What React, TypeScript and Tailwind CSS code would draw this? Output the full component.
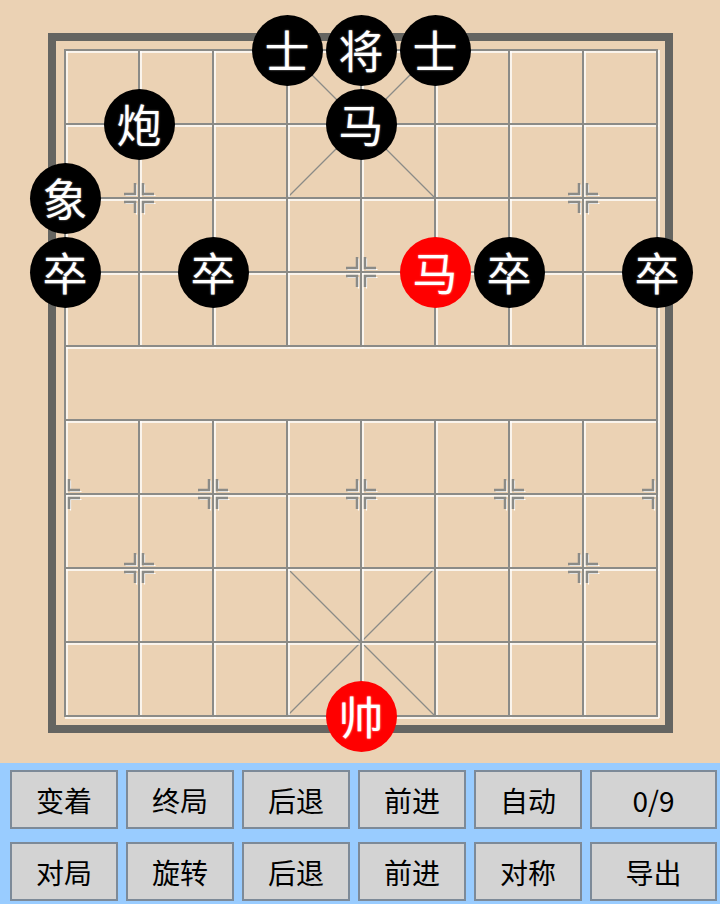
import React from "react";

const X0 = 65;
const Y0 = 50;
const STEP = 74;

const px = (c: number) => X0 + STEP * c;
const py = (r: number) => Y0 + STEP * r;

type Piece = { label: string; c: number; r: number; red?: boolean };

const pieces: Piece[] = [
  { label: "士", c: 3, r: 0 },
  { label: "将", c: 4, r: 0 },
  { label: "士", c: 5, r: 0 },
  { label: "炮", c: 1, r: 1 },
  { label: "马", c: 4, r: 1 },
  { label: "象", c: 0, r: 2 },
  { label: "卒", c: 0, r: 3 },
  { label: "卒", c: 2, r: 3 },
  { label: "马", c: 5, r: 3, red: true },
  { label: "卒", c: 6, r: 3 },
  { label: "卒", c: 8, r: 3 },
  { label: "帅", c: 4, r: 9, red: true },
];

// cannon / soldier marks
const marks: [number, number][] = [
  [1, 2], [7, 2],
  [0, 3], [2, 3], [4, 3], [6, 3], [8, 3],
  [0, 6], [2, 6], [4, 6], [6, 6], [8, 6],
  [1, 7], [7, 7],
];

const buttonRows = [
  ["变着", "终局", "后退", "前进", "自动", "0/9"],
  ["对局", "旋转", "后退", "前进", "对称", "导出"],
];

const GRAY = "#8b8b87";
const WHITE = "#ffffff";

function markPaths(c: number, r: number) {
  const x = px(c);
  const y = py(r);
  const g = 4;
  const l = 11;
  const out: string[] = [];
  for (const dx of [-1, 1]) {
    if (c === 0 && dx === -1) continue;
    if (c === 8 && dx === 1) continue;
    for (const dy of [-1, 1]) {
      out.push(
        `M${x + dx * g} ${y + dy * (g + l)}L${x + dx * g} ${y + dy * g}L${x + dx * (g + l)} ${y + dy * g}`,
      );
    }
  }
  return out;
}

function Board() {
  const vertical: [number, number, number][] = [];
  for (let c = 0; c <= 8; c++) {
    if (c === 0 || c === 8) {
      vertical.push([px(c), py(0), py(9)]);
    } else {
      vertical.push([px(c), py(0), py(4)]);
      vertical.push([px(c), py(5), py(9)]);
    }
  }
  const horizontal = Array.from({ length: 10 }, (_, r) => py(r));
  const diagonals = [
    [px(3), py(0), px(5), py(2)],
    [px(5), py(0), px(3), py(2)],
    [px(3), py(7), px(5), py(9)],
    [px(5), py(7), px(3), py(9)],
  ];
  const allMarks = marks.flatMap(([c, r]) => markPaths(c, r));

  return (
    <svg className="absolute left-0 top-0" width={720} height={763} viewBox="0 0 720 763">
      <rect x={52} y={37} width={617} height={692} fill="none" stroke="#656561" strokeWidth={8} />
      {diagonals.map(([x1, y1, x2, y2], i) => (
        <line key={i} x1={x1} y1={y1} x2={x2} y2={y2} stroke={GRAY} strokeWidth={1.3} />
      ))}
      {/* white highlight */}
      {vertical.map(([x, y1, y2], i) => (
        <line key={`vw${i}`} x1={x + 2} y1={y1} x2={x + 2} y2={y2 + 2} stroke={WHITE} strokeWidth={1.5} />
      ))}
      {horizontal.map((y, i) => (
        <line key={`hw${i}`} x1={px(0)} y1={y + 2} x2={px(8) + 2} y2={y + 2} stroke={WHITE} strokeWidth={1.5} />
      ))}
      {allMarks.map((d, i) => (
        <path key={`mw${i}`} d={d} transform="translate(1.5 1.5)" fill="none" stroke={WHITE} strokeWidth={1.2} />
      ))}
      {/* gray lines */}
      {vertical.map(([x, y1, y2], i) => (
        <line key={`vg${i}`} x1={x} y1={y1 - 1} x2={x} y2={y2 + 1} stroke={GRAY} strokeWidth={2} />
      ))}
      {horizontal.map((y, i) => (
        <line key={`hg${i}`} x1={px(0) - 1} y1={y} x2={px(8) + 1} y2={y} stroke={GRAY} strokeWidth={2} />
      ))}
      {allMarks.map((d, i) => (
        <path key={`mg${i}`} d={d} fill="none" stroke={GRAY} strokeWidth={2.5} />
      ))}
    </svg>
  );
}

export default function App() {
  return (
    <div
      className="flex h-[904px] w-[720px] flex-col overflow-hidden bg-[#ebd2b4]"
      style={{ fontFamily: '"Noto Sans CJK SC", "Noto Sans", sans-serif' }}
    >
      <div className="relative h-[763px] shrink-0">
        <Board />
        {pieces.map((p, i) => (
          <div
            key={i}
            className={`absolute flex h-[71px] w-[71px] items-center justify-center rounded-full text-[45px] leading-none text-white ${
              p.red ? "bg-[#ff0000] [text-shadow:0_0_2px_#ffb0b0]" : "bg-black [text-shadow:0_0_2px_#9a9a9a]"
            }`}
            style={{ left: px(p.c) - 35.5, top: py(p.r) - 35.5 }}
          >
            <span className="-mt-[2px]">{p.label}</span>
          </div>
        ))}
      </div>
      <div className="flex flex-1 flex-col gap-[13px] bg-[#99ccff] pl-[10px] pr-[3px] pt-[7px]">
        {buttonRows.map((row, ri) => (
          <div key={ri} className="flex gap-[8px]">
            {row.map((label, bi) => (
              <button
                key={bi}
                className={`flex h-[59px] items-center justify-center border-2 border-[#7d8a98] bg-[#d3d3d3] text-[28px] leading-none text-black ${
                  bi === row.length - 1 ? "flex-1" : "w-[108px]"
                }`}
              >
                {label}
              </button>
            ))}
          </div>
        ))}
      </div>
    </div>
  );
}
